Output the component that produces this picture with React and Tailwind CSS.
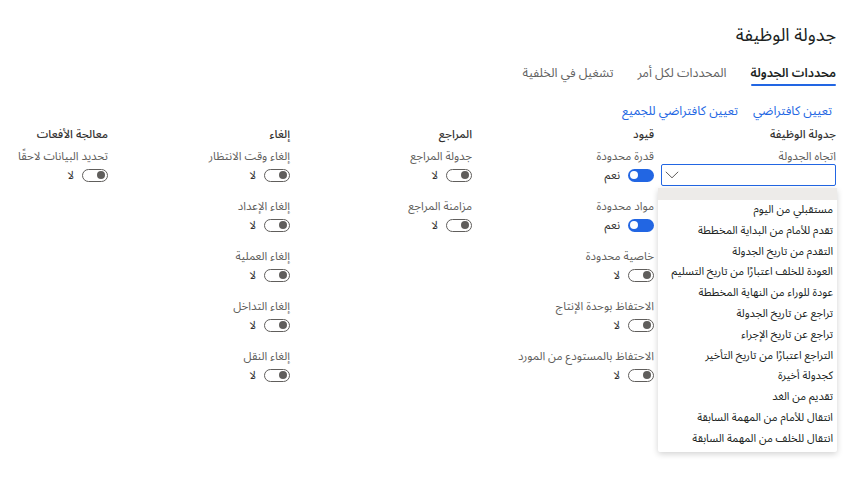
import React from "react";

const font = "font-['Noto_Sans_Arabic','DejaVu_Sans',sans-serif]";

const directionOptions = [
  "مستقبلي من اليوم",
  "تقدم للأمام من البداية المخططة",
  "التقدم من تاريخ الجدولة",
  "العودة للخلف اعتبارًا من تاريخ التسليم",
  "عودة للوراء من النهاية المخططة",
  "تراجع عن تاريخ الجدولة",
  "تراجع عن تاريخ الإجراء",
  "التراجع اعتبارًا من تاريخ التأخير",
  "كجدولة أخيرة",
  "تقديم من الغد",
  "انتقال للأمام من المهمة السابقة",
  "انتقال للخلف من المهمة السابقة",
];

const columns = [
  {
    title: "قيود",
    fields: [
      { label: "قدرة محدودة", on: true },
      { label: "مواد محدودة", on: true },
      { label: "خاصية محدودة", on: false },
      { label: "الاحتفاظ بوحدة الإنتاج", on: false },
      { label: "الاحتفاظ بالمستودع من المورد", on: false },
    ],
  },
  {
    title: "المراجع",
    fields: [
      { label: "جدولة المراجع", on: false },
      { label: "مزامنة المراجع", on: false },
    ],
  },
  {
    title: "إلغاء",
    fields: [
      { label: "إلغاء وقت الانتظار", on: false },
      { label: "إلغاء الإعداد", on: false },
      { label: "إلغاء العملية", on: false },
      { label: "إلغاء التداخل", on: false },
      { label: "إلغاء النقل", on: false },
    ],
  },
  {
    title: "معالجة الأفعات",
    fields: [{ label: "تحديد البيانات لاحقًا", on: false }],
  },
];

const Toggle = ({ on }) => (
  <div className="flex items-center gap-[8px] h-[16px]">
    {on ? (
      <div className="w-[26px] h-[13px] rounded-full bg-[#2266e3] flex items-center justify-end px-[2px]">
        <div className="w-[8px] h-[8px] rounded-full bg-white" />
      </div>
    ) : (
      <div className="w-[26px] h-[13px] rounded-full border border-[#605e5c] flex items-center justify-start px-[2px]">
        <div className="w-[8px] h-[8px] rounded-full bg-[#605e5c]" />
      </div>
    )}
    <span className="text-[11.5px] text-[#323130] leading-[16px]">{on ? "نعم" : "لا"}</span>
  </div>
);

const Field = ({ label, on }) => (
  <div className="h-[50px]">
    <div className="text-[11.5px] leading-[16px] text-[#605e5c] h-[16px] whitespace-nowrap">{label}</div>
    <div className="mt-[3px]">
      <Toggle on={on} />
    </div>
  </div>
);

export default function App() {
  return (
    <div dir="rtl" className={`w-[856px] h-[490px] bg-white overflow-hidden pr-[20px] ${font}`}>
      {/* Title */}
      <h1 className="pt-[23px] h-[47px] text-[18px] leading-[24px] text-[#201f1e]">جدولة الوظيفة</h1>

      {/* Tabs */}
      <div className="mt-[17px] h-[24px] flex gap-[24px] text-[12.5px] leading-[18px]">
        <div className="relative h-[24px]">
          <span className="font-semibold text-[#201f1e]">محددات الجدولة</span>
          <div className="absolute left-0 right-0 bottom-[2px] h-[2px] bg-[#2266e3] rounded" />
        </div>
        <span className="text-[#616161]">المحددات لكل أمر</span>
        <span className="text-[#616161]">تشغيل في الخلفية</span>
      </div>

      {/* Actions */}
      <div className="mt-[14px] h-[18px] pr-[4px] flex gap-[15px] text-[12.5px] leading-[18px] text-[#2266e3]">
        <span>تعيين كافتراضي</span>
        <span>تعيين كافتراضي للجميع</span>
      </div>

      {/* Field groups */}
      <div className="mt-[6px] flex">
        <div className="w-[182px] shrink-0">
          <div className="text-[11.5px] leading-[16px] font-medium text-[#323130] h-[22px]">جدولة الوظيفة</div>
          <div className="text-[11.5px] leading-[16px] text-[#605e5c] h-[16px]">اتجاه الجدولة</div>
          <div className="relative w-[175px]">
            <div className="h-[22px] border border-[#2266e3] rounded-[2px] flex items-center justify-end pl-[3px]">
              <svg width="14" height="8" viewBox="0 0 14 8" fill="none">
                <path d="M0.8 0.8 L7 6.8 L13.2 0.8" stroke="#605e5c" strokeWidth="1" />
              </svg>
            </div>
            <div className="absolute top-[24px] right-[-1px] w-[179px] bg-white rounded-[2px] shadow-[0_2px_6px_rgba(0,0,0,0.18)] z-10 pb-[2px]">
              <div className="h-[12px] bg-[#edebe9]" />
              {directionOptions.map((opt) => (
                <div key={opt} className="h-[20.8px] leading-[20.8px] pr-[4px] text-[11px] text-[#201f1e] whitespace-nowrap">
                  {opt}
                </div>
              ))}
            </div>
          </div>
        </div>

        {columns.map((col) => (
          <div key={col.title} className="w-[182px] shrink-0">
            <div className="text-[11.5px] leading-[16px] font-medium text-[#323130] h-[22px]">{col.title}</div>
            {col.fields.map((f) => (
              <Field key={f.label} label={f.label} on={f.on} />
            ))}
          </div>
        ))}
      </div>
    </div>
  );
}
